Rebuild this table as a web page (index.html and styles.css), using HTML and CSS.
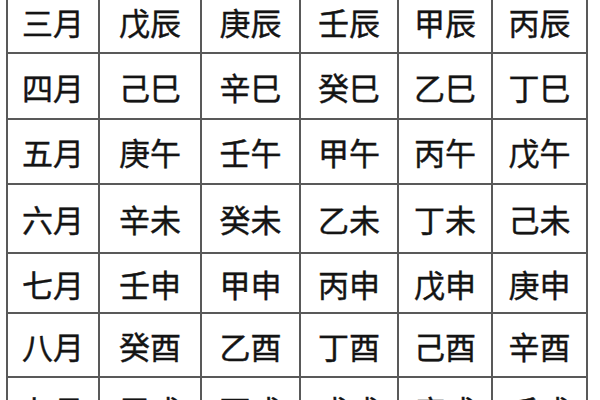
FILE: index.html
```html
<!DOCTYPE html>
<html lang="zh">
<head>
<meta charset="utf-8">
<link rel="stylesheet" href="styles.css">
</head>
<body>
<table class="ganzhi">
  <colgroup>
    <col class="c1"><col class="c2"><col class="c3"><col class="c4"><col class="c5"><col class="c6">
  </colgroup>
  <tr class="r1"><td>三月</td><td>戊辰</td><td>庚辰</td><td>壬辰</td><td>甲辰</td><td>丙辰</td></tr>
  <tr class="r2"><td>四月</td><td>己巳</td><td>辛巳</td><td>癸巳</td><td>乙巳</td><td>丁巳</td></tr>
  <tr class="r3"><td>五月</td><td>庚午</td><td>壬午</td><td>甲午</td><td>丙午</td><td>戊午</td></tr>
  <tr class="r4"><td>六月</td><td>辛未</td><td>癸未</td><td>乙未</td><td>丁未</td><td>己未</td></tr>
  <tr class="r5"><td>七月</td><td>壬申</td><td>甲申</td><td>丙申</td><td>戊申</td><td>庚申</td></tr>
  <tr class="r6"><td>八月</td><td>癸酉</td><td>乙酉</td><td>丁酉</td><td>己酉</td><td>辛酉</td></tr>
  <tr class="r7"><td>九月</td><td>甲戌</td><td>丙戌</td><td>戊戌</td><td>庚戌</td><td>壬戌</td></tr>
</table>
</body>
</html>
```
FILE: styles.css
```css
html, body {
  margin: 0;
  padding: 0;
  background: #ffffff;
  overflow: hidden;
}
.ganzhi {
  border-collapse: collapse;
  table-layout: fixed;
  width: 582px;
  margin: -12px 0 0 6px;
  font-family: "Noto Sans CJK SC", "Noto Sans CJK JP", sans-serif;
  font-size: 31px;
  color: #141414;
  -webkit-text-stroke: 0.4px #141414;
}
.ganzhi td {
  border: 2px solid #595959;
  text-align: center;
  vertical-align: middle;
  padding: 0;
  line-height: 1;
}
.c1 { width: 92px; }
.c2 { width: 102px; }
.c3 { width: 99px; }
.c4 { width: 98px; }
.c5 { width: 94px; }
.c6 { width: 95px; }
.r1 { height: 64px; }
.r2 { height: 66px; }
.r3 { height: 65px; }
.r4 { height: 69px; }
.r5 { height: 60px; }
.r6 { height: 64px; }
.r7 { height: 64px; }
```
